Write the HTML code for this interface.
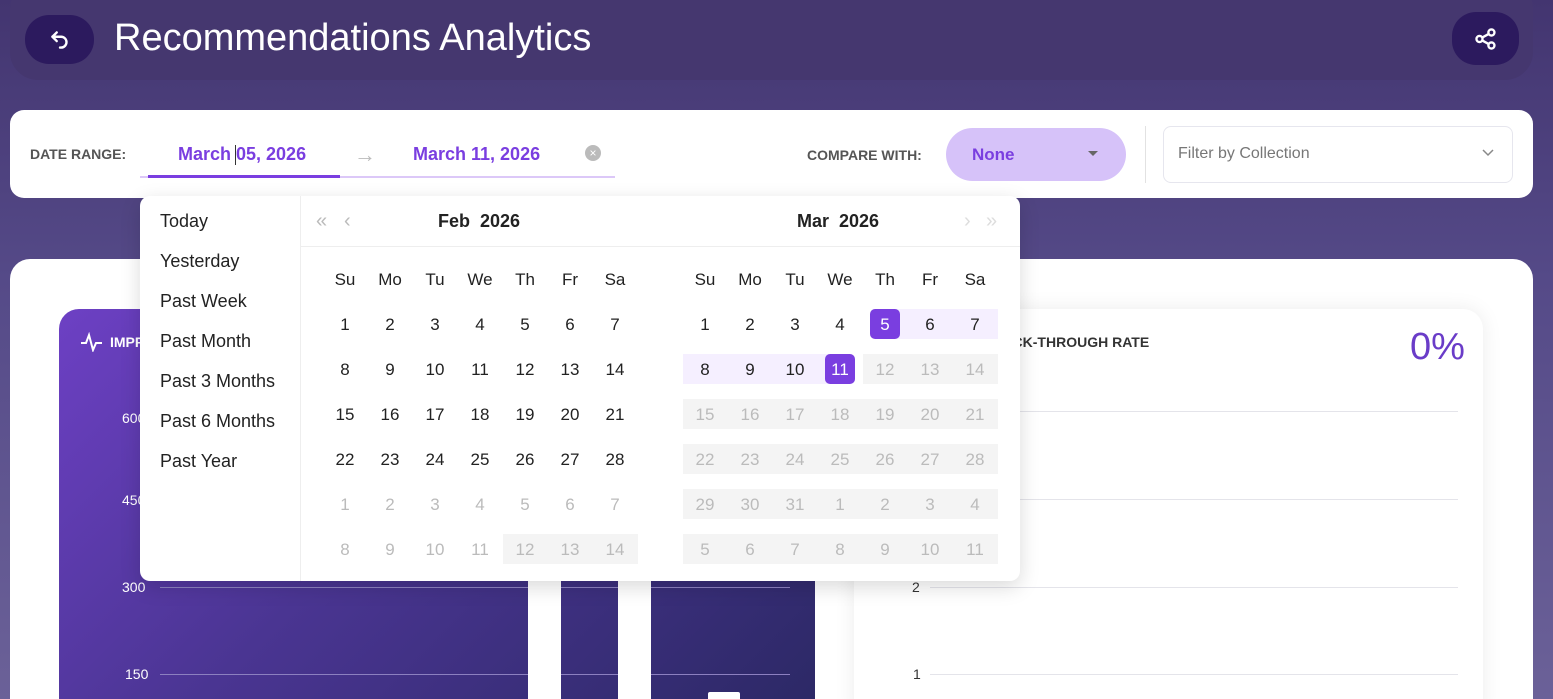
<!DOCTYPE html>
<html><head><meta charset="utf-8"><style>
*{box-sizing:border-box;margin:0;padding:0}
html,body{width:1553px;height:699px;overflow:hidden}
body{font-family:"Liberation Sans",sans-serif;background:linear-gradient(180deg,#433570 0%,#554a88 40%,#6b6198 100%);position:relative}
.abs{position:absolute}
.hdr{left:10px;top:-20px;width:1523px;height:100px;background:#45376f;border-radius:28px}
.btn{background:#2c1a5e;border-radius:24px;display:flex;align-items:center;justify-content:center}
.card{background:#fff}
.lbl{font-size:14px;font-weight:bold;color:#555}
.grid{position:absolute;width:315px}
.row{display:flex;height:45px}
.c{width:45px;height:45px;display:flex;align-items:center;justify-content:center;font-size:17px;color:#222;position:relative;padding-top:2px}
.c span{position:relative;z-index:1}
.g{color:#bbb}
.dis::before{content:"";position:absolute;left:0;right:0;top:7.5px;height:30px;background:#f4f4f4}
.rng::before{content:"";position:absolute;left:0;right:0;top:7.5px;height:30px;background:#f5efff}
.sel::after{content:"";position:absolute;left:7.5px;width:30px;top:7.5px;height:30px;background:#7a3ee0;border-radius:5px}
.sel span{color:#fff;z-index:2}
.hr::before{left:50%!important}
.hl::before{right:50%!important}
.pre{font-size:18px;color:#222;height:40px;line-height:40px}
</style></head><body>
<div class="abs hdr"></div>
<div class="abs btn" style="left:25px;top:15px;width:69px;height:49px"><svg width="26" height="26" viewBox="0 0 24 24" fill="none" stroke="#fff" stroke-width="2.2" stroke-linecap="round" stroke-linejoin="round"><path d="M9 5L5 9l4 4"/><path d="M5 9h8a5 5 0 0 1 0 10h-1"/></svg></div>
<div class="abs" style="left:114px;top:17px;font-size:38px;color:#fff">Recommendations Analytics</div>
<div class="abs btn" style="left:1452px;top:12px;width:67px;height:53px"><svg width="26" height="26" viewBox="0 0 24 24" fill="none" stroke="#fff" stroke-width="2.2"><circle cx="17" cy="6" r="2.8"/><circle cx="6" cy="12" r="2.8"/><circle cx="17" cy="18" r="2.8"/><path d="M8.5 10.7l6-3.4M8.5 13.3l6 3.4"/></svg></div>

<div class="abs card" style="left:10px;top:110px;width:1523px;height:88px;border-radius:14px"></div>
<div class="abs lbl" style="left:30px;top:146px">DATE RANGE:</div>
<div class="abs" style="left:178px;top:144px;font-size:18px;color:#7a3ee0;font-weight:bold">March 05, 2026</div>
<div class="abs" style="left:235px;top:145px;width:1px;height:20px;background:#333"></div>
<div class="abs" style="left:354px;top:142px;font-size:22px;color:#bbb">→</div>
<div class="abs" style="left:413px;top:144px;font-size:18px;color:#7a3ee0;font-weight:bold">March 11, 2026</div>
<div class="abs" style="left:585px;top:145px;width:16px;height:16px;border-radius:50%;background:#bbb;color:#fff;font-size:12px;text-align:center;line-height:16px">×</div>
<div class="abs" style="left:140px;top:176px;width:475px;height:2px;background:#dcc8f8"></div>
<div class="abs" style="left:148px;top:175px;width:192px;height:3px;background:#7a3ee0"></div>
<div class="abs lbl" style="left:807px;top:147px">COMPARE WITH:</div>
<div class="abs" style="left:946px;top:128px;width:180px;height:53px;border-radius:27px;background:#d6c2f9"></div>
<div class="abs" style="left:972px;top:145px;font-size:17px;font-weight:bold;color:#7a3ee0">None</div>
<div class="abs" style="left:1088px;top:151px;width:0;height:0;border-left:5px solid transparent;border-right:5px solid transparent;border-top:5px solid #666"></div>
<div class="abs" style="left:1145px;top:126px;width:1px;height:57px;background:#e2e2e2"></div>
<div class="abs" style="left:1163px;top:126px;width:350px;height:57px;border:1px solid #e6e6ee;border-radius:8px"></div>
<div class="abs" style="left:1178px;top:145px;font-size:16px;color:#777">Filter by Collection</div>
<svg class="abs" style="left:1480px;top:147px" width="16" height="12" viewBox="0 0 16 12" fill="none" stroke="#888" stroke-width="1.5"><path d="M3 3l5 5 5-5"/></svg>

<div class="abs card" style="left:10px;top:259px;width:1523px;height:460px;border-radius:20px"></div>
<div class="abs" style="left:59px;top:309px;width:756px;height:420px;border-radius:20px;background:linear-gradient(135deg,#6d40c4 0%,#4a3592 45%,#2b2864 100%)"></div>
<svg class="abs" style="left:80px;top:332px" width="24" height="20" viewBox="0 0 24 20" fill="none" stroke="#fff" stroke-width="2"><path d="M1 11h5l3-8 4 15 3-7h6"/></svg>
<div class="abs" style="left:110px;top:334px;font-size:14px;font-weight:bold;color:#fff">IMPRESSIONS</div>
<div class="abs" style="left:122px;top:410px;font-size:14px;color:#fff">600</div>
<div class="abs" style="left:122px;top:492px;font-size:14px;color:#fff">450</div>
<div class="abs" style="left:122px;top:579px;font-size:14px;color:#fff">300</div>
<div class="abs" style="left:125px;top:666px;font-size:14px;color:#fff">150</div>
<div class="abs" style="left:160px;top:587px;width:630px;height:1px;background:#8c80c0"></div>
<div class="abs" style="left:160px;top:674px;width:630px;height:1px;background:#8c80c0"></div>
<div class="abs" style="left:528px;top:400px;width:33px;height:300px;background:#fff"></div>
<div class="abs" style="left:618px;top:400px;width:33px;height:300px;background:#fff"></div>
<div class="abs" style="left:708px;top:692px;width:32px;height:10px;background:#fff;border-radius:2px"></div>

<div class="abs" style="left:854px;top:309px;width:629px;height:420px;border-radius:20px;background:#fff;box-shadow:0 0 20px rgba(0,0,0,.08)"></div>
<div class="abs" style="left:990px;top:334px;font-size:14px;font-weight:bold;color:#333">CLICK-THROUGH RATE</div>
<div class="abs" style="left:1410px;top:326px;font-size:38px;color:#6a3cc8">0%</div>
<div class="abs" style="left:930px;top:411px;width:528px;height:1px;background:#e4e4ea"></div>
<div class="abs" style="left:930px;top:499px;width:528px;height:1px;background:#e4e4ea"></div>
<div class="abs" style="left:930px;top:587px;width:528px;height:1px;background:#e4e4ea"></div>
<div class="abs" style="left:930px;top:674px;width:528px;height:1px;background:#e4e4ea"></div>
<div class="abs" style="left:912px;top:579px;font-size:14px;color:#333">2</div>
<div class="abs" style="left:913px;top:666px;font-size:14px;color:#333">1</div>

<div class="abs" style="left:140px;top:196px;width:880px;height:385px;background:#fff;border-radius:10px;box-shadow:0 6px 20px rgba(0,0,0,.15)"></div>
<div class="abs" style="left:300px;top:196px;width:1px;height:385px;background:#eee"></div>
<div class="abs" style="left:301px;top:246px;width:719px;height:1px;background:#eee"></div>
<div class="abs" style="left:160px;top:201px">
<div class="pre">Today</div><div class="pre">Yesterday</div><div class="pre">Past Week</div><div class="pre">Past Month</div><div class="pre">Past 3 Months</div><div class="pre">Past 6 Months</div><div class="pre">Past Year</div></div>
<div class="abs" style="left:316px;top:210px;font-size:20px;color:#bbb;letter-spacing:-3px">«</div>
<div class="abs" style="left:344px;top:210px;font-size:20px;color:#bbb">‹</div>
<div class="abs" style="left:438px;top:211px;font-size:18px;font-weight:bold;color:#222">Feb&nbsp; 2026</div>
<div class="abs" style="left:797px;top:211px;font-size:18px;font-weight:bold;color:#222">Mar&nbsp; 2026</div>
<div class="abs" style="left:964px;top:210px;font-size:20px;color:#ddd">›</div>
<div class="abs" style="left:986px;top:210px;font-size:20px;color:#ddd;letter-spacing:-3px">»</div>

<div class="grid" style="left:322.5px;top:256.5px">
<div class="row"><div class="c">Su</div><div class="c">Mo</div><div class="c">Tu</div><div class="c">We</div><div class="c">Th</div><div class="c">Fr</div><div class="c">Sa</div></div>
<div class="row"><div class="c">1</div><div class="c">2</div><div class="c">3</div><div class="c">4</div><div class="c">5</div><div class="c">6</div><div class="c">7</div></div>
<div class="row"><div class="c">8</div><div class="c">9</div><div class="c">10</div><div class="c">11</div><div class="c">12</div><div class="c">13</div><div class="c">14</div></div>
<div class="row"><div class="c">15</div><div class="c">16</div><div class="c">17</div><div class="c">18</div><div class="c">19</div><div class="c">20</div><div class="c">21</div></div>
<div class="row"><div class="c">22</div><div class="c">23</div><div class="c">24</div><div class="c">25</div><div class="c">26</div><div class="c">27</div><div class="c">28</div></div>
<div class="row"><div class="c g">1</div><div class="c g">2</div><div class="c g">3</div><div class="c g">4</div><div class="c g">5</div><div class="c g">6</div><div class="c g">7</div></div>
<div class="row"><div class="c g">8</div><div class="c g">9</div><div class="c g">10</div><div class="c g">11</div><div class="c g dis"><span>12</span></div><div class="c g dis"><span>13</span></div><div class="c g dis"><span>14</span></div></div>
</div>

<div class="grid" style="left:682.5px;top:256.5px">
<div class="row"><div class="c">Su</div><div class="c">Mo</div><div class="c">Tu</div><div class="c">We</div><div class="c">Th</div><div class="c">Fr</div><div class="c">Sa</div></div>
<div class="row"><div class="c">1</div><div class="c">2</div><div class="c">3</div><div class="c">4</div><div class="c rng hr sel"><span>5</span></div><div class="c rng"><span>6</span></div><div class="c rng"><span>7</span></div></div>
<div class="row"><div class="c rng"><span>8</span></div><div class="c rng"><span>9</span></div><div class="c rng"><span>10</span></div><div class="c rng hl sel"><span>11</span></div><div class="c g dis"><span>12</span></div><div class="c g dis"><span>13</span></div><div class="c g dis"><span>14</span></div></div>
<div class="row"><div class="c g dis"><span>15</span></div><div class="c g dis"><span>16</span></div><div class="c g dis"><span>17</span></div><div class="c g dis"><span>18</span></div><div class="c g dis"><span>19</span></div><div class="c g dis"><span>20</span></div><div class="c g dis"><span>21</span></div></div>
<div class="row"><div class="c g dis"><span>22</span></div><div class="c g dis"><span>23</span></div><div class="c g dis"><span>24</span></div><div class="c g dis"><span>25</span></div><div class="c g dis"><span>26</span></div><div class="c g dis"><span>27</span></div><div class="c g dis"><span>28</span></div></div>
<div class="row"><div class="c g dis"><span>29</span></div><div class="c g dis"><span>30</span></div><div class="c g dis"><span>31</span></div><div class="c g dis"><span>1</span></div><div class="c g dis"><span>2</span></div><div class="c g dis"><span>3</span></div><div class="c g dis"><span>4</span></div></div>
<div class="row"><div class="c g dis"><span>5</span></div><div class="c g dis"><span>6</span></div><div class="c g dis"><span>7</span></div><div class="c g dis"><span>8</span></div><div class="c g dis"><span>9</span></div><div class="c g dis"><span>10</span></div><div class="c g dis"><span>11</span></div></div>
</div>
</body></html>
